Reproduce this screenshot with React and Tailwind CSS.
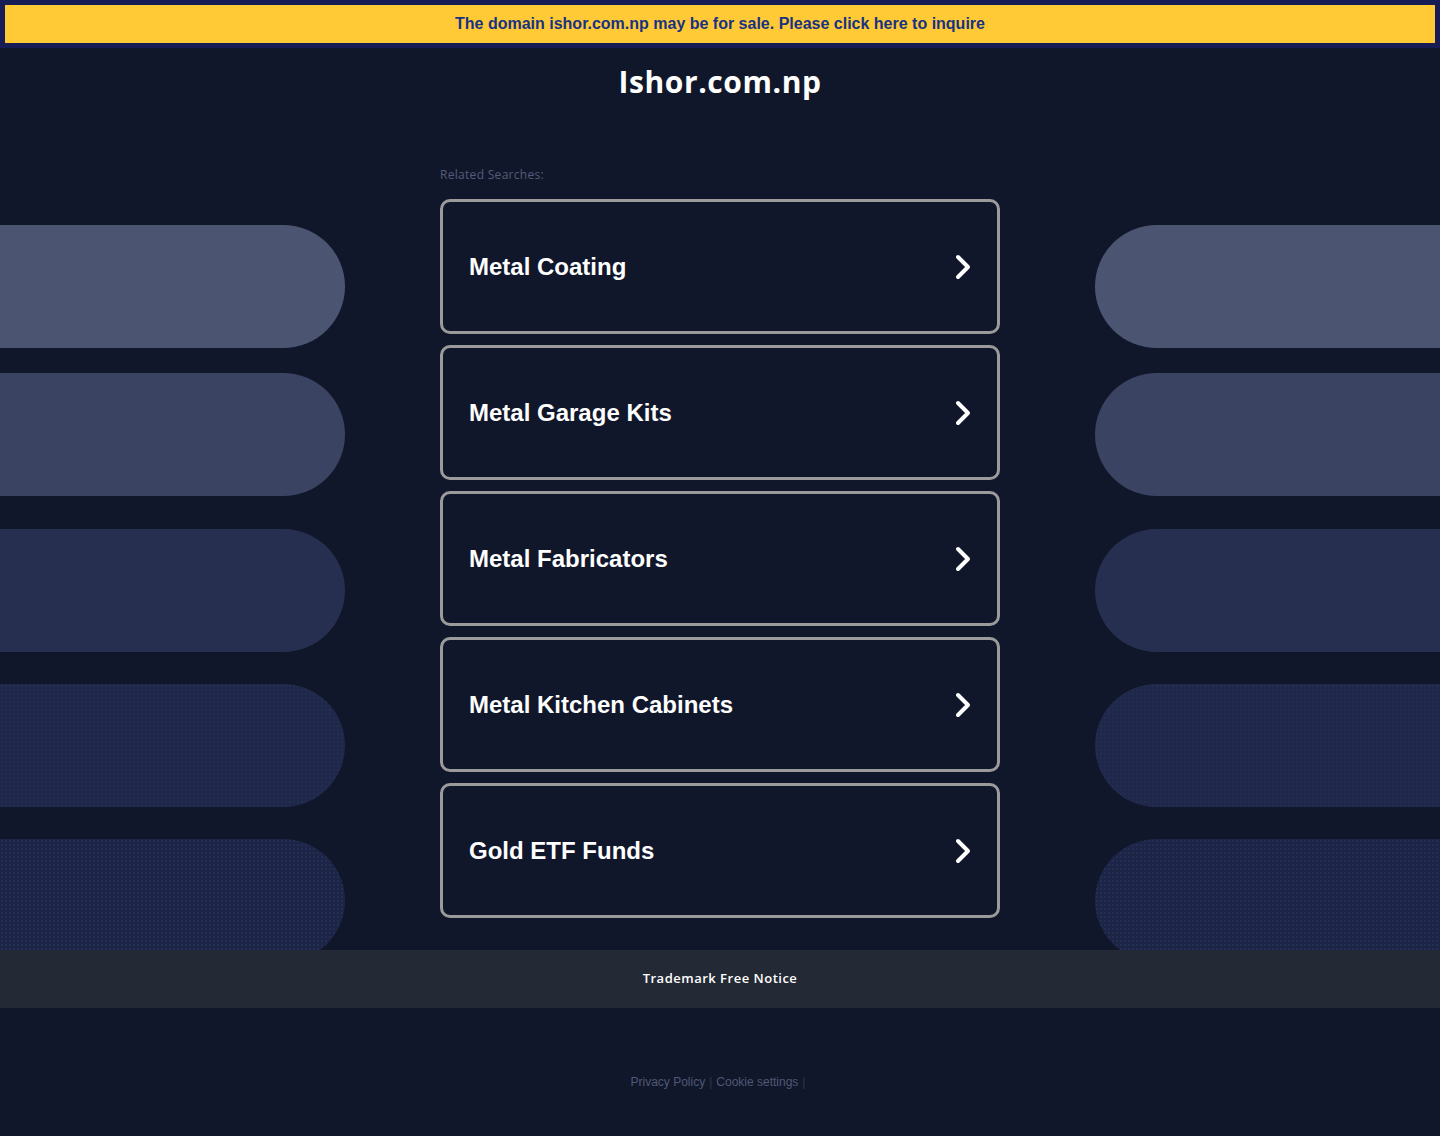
const searches = [
  "Metal Coating",
  "Metal Garage Kits",
  "Metal Fabricators",
  "Metal Kitchen Cabinets",
  "Gold ETF Funds",
];

// decorative pills down each side
const pills = [
  { mt: "mt-[177px]", color: "bg-[#4b5571]" },
  { mt: "mt-[25px]", color: "bg-[#3a4361]" },
  { mt: "mt-[33px]", color: "bg-[#262f4f]" },
  { mt: "mt-[32px]", color: "bg-[#1f2848]", dotted: true },
  { mt: "mt-[32px]", color: "bg-[#1c2545]", dotted: true },
];

const Chevron = () => (
  <svg className="w-[18px] h-[28px]" viewBox="0 0 18 28" fill="none" stroke="currentColor">
    <path d="M4 4l10 10-10 10" strokeWidth={4} strokeLinecap="round" strokeLinejoin="round" />
  </svg>
);

const PillColumn = ({ side }) => (
  <div className="w-[345px] flex flex-col">
    {pills.map((p, i) => (
      <div
        key={i}
        className={`${p.mt} h-[123px] shrink-0 ${p.color} ${
          side === "left" ? "rounded-r-full" : "rounded-l-full"
        } ${
          p.dotted
            ? "bg-[radial-gradient(#242d53_0.8px,transparent_0.9px)] bg-[length:4px_4px]"
            : ""
        }`}
      />
    ))}
  </div>
);

export default function App() {
  return (
    <div className="min-h-[1136px] bg-[#11172b] font-['Liberation_Sans',Arial,sans-serif]">
      {/* sale banner */}
      <div className="bg-[#181c54] px-[5px] pt-[5px] pb-[5px]">
        <a
          href="#"
          className="flex h-[38px] items-center justify-center bg-[#ffca35] text-[16px] font-bold text-[#183283]"
        >
          The domain ishor.com.np may be for sale. Please click here to inquire
        </a>
      </div>

      {/* main */}
      <div className="flex h-[902px] justify-between overflow-hidden">
        <PillColumn side="left" />

        <div className="w-[560px] flex flex-col">
          <h1 className="pt-[16px] text-center text-[30px] leading-[36px] font-bold text-white tracking-[0.6px] font-['Open_Sans',sans-serif]">
            Ishor.com.np
          </h1>
          <p className="mt-[68px] text-[12px] leading-[14px] tracking-[0.3px] text-[#535c78] font-['Open_Sans',sans-serif]">
            Related Searches:
          </p>
          <div className="mt-[17px] flex flex-col gap-[11px]">
            {searches.map((s) => (
              <a
                key={s}
                href="#"
                className="flex h-[135px] items-center justify-between rounded-[10px] border-[3px] border-[#9b9b9b] pl-[26px] pr-[25px] text-white"
              >
                <span className="text-[24px] font-bold">{s}</span>
                <Chevron />
              </a>
            ))}
          </div>
        </div>

        <PillColumn side="right" />
      </div>

      {/* footer */}
      <div className="flex h-[58px] items-center justify-center bg-[#242a35]">
        <span className="text-[13px] font-semibold text-white tracking-[0.5px] font-['Open_Sans',sans-serif]">
          Trademark Free Notice
        </span>
      </div>

      <div className="mt-[65px] flex justify-center gap-[4px] pr-[4px] text-[12px] text-[#4f5874]">
        <a href="#">Privacy Policy</a>
        <span className="text-[#2e3550]">|</span>
        <a href="#">Cookie settings</a>
        <span className="text-[#2e3550]">|</span>
      </div>
    </div>
  );
}
